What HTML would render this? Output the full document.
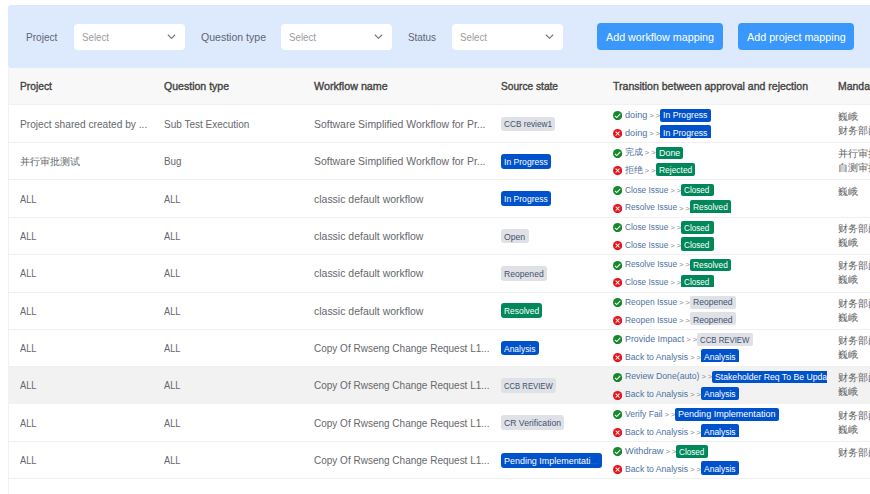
<!DOCTYPE html>
<html lang="en">
<head>
<meta charset="utf-8">
<title>Workflow mapping</title>
<style>
html,body{margin:0;padding:0;background:#fff;}
body{width:870px;height:494px;overflow:hidden;position:relative;font-family:"Liberation Sans",sans-serif;color:#606266;}
.panel{position:absolute;left:8px;top:5px;width:862px;height:63px;}
.pbg{position:absolute;left:0.3px;top:0.3px;width:862px;height:62.5px;background:#dde9fc;border-radius:3px 0 0 3px;}
.lbl{position:absolute;transform-origin:0 50%;top:23.7px;font-size:11px;line-height:16px;color:#5d6575;white-space:nowrap;}
.sel{position:absolute;top:19px;width:111px;height:26px;background:#fff;border-radius:4px;}
.sel .ph{position:absolute;transform-origin:0 50%;left:8.1px;top:4.7px;font-size:11px;line-height:16px;color:#9a9ca1;}
.sel .chev{position:absolute;left:93.3px;top:10.1px;width:9px;height:5.4px;}
.btn{position:absolute;top:18px;height:27px;background:#3a98fc;border-radius:4px;color:#fff;text-align:center;}
.btn span{position:absolute;top:1.3px;transform-origin:0 50%;font-size:11px;line-height:27px;white-space:nowrap;}
.tbl{position:absolute;left:8px;top:68px;width:862px;height:426px;}
.lb{position:absolute;left:8px;top:68px;width:1px;height:426px;background:#f2f2f2;}
.thead{position:absolute;left:0;top:0;width:862px;height:37.4px;background:#f8f8f8;border-bottom:1px solid #f1f1f1;box-sizing:border-box;}
.th{position:absolute;transform-origin:0 50%;top:10.2px;font-size:11px;line-height:16px;font-weight:normal;-webkit-text-stroke:0.38px #444;color:#444;white-space:nowrap;}
.tr{position:absolute;left:0;width:862px;height:37.35px;}
.bl{position:absolute;left:0;width:862px;height:1px;background:#f0f0f0;}
.tr.hov{background:#f2f2f2;}
.td{position:absolute;transform-origin:0 50%;top:11px;font-size:11px;line-height:16px;color:#66686c;white-space:nowrap;}
.tag{position:absolute;display:block;height:12.6px;border-radius:2px;overflow:hidden;white-space:nowrap;font-size:9.7px;line-height:12.6px;text-align:center;}
.tag i{font-style:normal;position:absolute;left:3.1px;top:0;transform-origin:0 50%;}
.tag.st{top:11.7px;height:14.8px;line-height:14.8px;font-size:9.9px;border-radius:3px;}
.tag.st i{top:0.9px;}
.tag.g{background:#dfe1e6;color:#42526e;}
.tag.b{background:#0052cc;color:#fff;}
.tag.gr{background:#00875a;color:#fff;}
.trans{position:absolute;left:605px;top:0;width:214.2px;height:34px;overflow:hidden;}
.ln{position:absolute;left:0;width:300px;height:16px;}
.ln.l0{top:0;}
.ln.l1{top:17.9px;}
.ln .ic{position:absolute;left:-0.3px;top:6.3px;width:9.2px;height:9.2px;}
.ln .tx{position:absolute;transform-origin:0 50%;left:12.4px;top:3px;font-size:9.7px;line-height:14px;color:#4d72a3;white-space:nowrap;}
.ln .gt{position:absolute;top:4.1px;font-size:7.9px;line-height:14px;color:#8c8c8c;white-space:nowrap;letter-spacing:1.7px;}
.ln.l0 .tag{top:4.3px;}
.ln.l1 .tag{top:2.5px;}
.ln.l0 .tag i{top:0.3px;}
.ln.l1 .tag i{top:1.5px;}
.manda{position:absolute;left:830px;top:5px;width:40px;font-size:10px;line-height:14px;color:#606266;white-space:nowrap;overflow:hidden;}
.tr.odd .ln.l1 .tag{border-bottom-left-radius:0;border-bottom-right-radius:0;}
.tr.even .ln.l1 .tag{height:13.2px;}
.tag i b{font-weight:normal;color:rgba(255,255,255,.22);}
</style>
</head>
<body>
<div class="panel">
  <div class="pbg"></div>
  <span class="lbl" style="left:18.2px;transform:scaleX(0.917)">Project</span>
  <div class="sel" style="left:66.0px"><span class="ph" style="transform:scaleX(0.883)">Select</span><svg class="chev" viewBox="0 0 10 6"><path d="M1 0.8l4 4 4-4" fill="none" stroke="#75767a" stroke-width="1.3"/></svg></div>
  <span class="lbl" style="left:192.8px;transform:scaleX(0.958)">Question type</span>
  <div class="sel" style="left:273.0px"><span class="ph" style="transform:scaleX(0.883)">Select</span><svg class="chev" viewBox="0 0 10 6"><path d="M1 0.8l4 4 4-4" fill="none" stroke="#75767a" stroke-width="1.3"/></svg></div>
  <span class="lbl" style="left:400.1px;transform:scaleX(0.898)">Status</span>
  <div class="sel" style="left:444.0px"><span class="ph" style="transform:scaleX(0.883)">Select</span><svg class="chev" viewBox="0 0 10 6"><path d="M1 0.8l4 4 4-4" fill="none" stroke="#75767a" stroke-width="1.3"/></svg></div>
  <div class="btn" style="left:589.0px;width:125.7px"><span style="left:8.9px;transform:scaleX(0.976)">Add workflow mapping</span></div>
  <div class="btn" style="left:729.7px;width:116.6px"><span style="left:8.9px;transform:scaleX(0.978)">Add project mapping</span></div>
</div>
<div class="tbl">
<div class="thead">
  <span class="th" style="left:11.9px;transform:scaleX(0.931)">Project</span>
  <span class="th" style="left:156.0px;transform:scaleX(0.959)">Question type</span>
  <span class="th" style="left:305.6px;transform:scaleX(0.975)">Workflow name</span>
  <span class="th" style="left:492.9px;transform:scaleX(0.923)">Source state</span>
  <span class="th" style="left:605.3px;transform:scaleX(0.957)">Transition between approval and rejection</span>
  <span class="th" style="left:829.9px;transform:scaleX(0.95)">Mandatory approver</span>
</div>
<div class="tr odd" style="top:36.90px">
  <span class="td" style="left:12.1px;transform:scaleX(0.925)">Project shared created by ...</span>
  <span class="td" style="left:156.3px;transform:scaleX(0.909)">Sub Test Execution</span>
  <span class="td" style="left:305.8px;transform:scaleX(0.949)">Software Simplified Workflow for Pr...</span>
  <span class="tag g st" style="left:493.2px;width:54.2px"><i style="transform:scaleX(0.833)">CCB review1</i></span>
  <div class="trans">
    <div class="ln l0"><svg class="ic" viewBox="0 0 16 16"><circle cx="8" cy="8" r="8" fill="#14892c"/><path d="M3.4 8.4l3.2 3 6-6.3" fill="none" stroke="#fff" stroke-width="1.9"/></svg><span class="tx" style="transform:scaleX(0.944)">doing</span><span class="gt" style="left:36.3px">&gt;&gt;</span><span class="tag b" style="left:47.3px;width:50.6px"><i style="transform:scaleX(0.896)">In Progress</i></span></div>
    <div class="ln l1"><svg class="ic" viewBox="0 0 16 16"><circle cx="8" cy="8" r="8" fill="#e6151f"/><path d="M4.7 4.7l6.6 6.6M11.3 4.7l-6.6 6.6" fill="none" stroke="#fff" stroke-width="1.75"/></svg><span class="tx" style="transform:scaleX(0.944)">doing</span><span class="gt" style="left:36.3px">&gt;&gt;</span><span class="tag b" style="left:47.3px;width:50.6px"><i style="transform:scaleX(0.896)">In Progress</i></span></div>
  </div>
  <div class="manda"><div>巍峨</div><div>财务部门</div></div>
</div>
<div class="tr even" style="top:74.25px">
  <span class="td" style="left:12.1px;font-size:10.45px;top:11.8px">并行审批测试</span>
  <span class="td" style="left:156.3px;transform:scaleX(0.894)">Bug</span>
  <span class="td" style="left:305.8px;transform:scaleX(0.949)">Software Simplified Workflow for Pr...</span>
  <span class="tag b st" style="left:493.2px;width:50.1px"><i style="transform:scaleX(0.869)">In Progress</i></span>
  <div class="trans">
    <div class="ln l0"><svg class="ic" viewBox="0 0 16 16"><circle cx="8" cy="8" r="8" fill="#14892c"/><path d="M3.4 8.4l3.2 3 6-6.3" fill="none" stroke="#fff" stroke-width="1.9"/></svg><span class="tx" style="font-size:9px">完成</span><span class="gt" style="left:31.6px">&gt;&gt;</span><span class="tag gr" style="left:42.6px;width:27.5px"><i style="transform:scaleX(0.919)">Done</i></span></div>
    <div class="ln l1"><svg class="ic" viewBox="0 0 16 16"><circle cx="8" cy="8" r="8" fill="#e6151f"/><path d="M4.7 4.7l6.6 6.6M11.3 4.7l-6.6 6.6" fill="none" stroke="#fff" stroke-width="1.75"/></svg><span class="tx" style="font-size:9px">拒绝</span><span class="gt" style="left:31.6px">&gt;&gt;</span><span class="tag gr" style="left:42.6px;width:39.5px"><i style="transform:scaleX(0.871)">Rejected</i></span></div>
  </div>
  <div class="manda"><div>并行审批</div><div>自测审批</div></div>
</div>
<div class="tr odd" style="top:111.60px">
  <span class="td" style="left:12.1px;transform:scaleX(0.843)">ALL</span>
  <span class="td" style="left:156.3px;transform:scaleX(0.843)">ALL</span>
  <span class="td" style="left:305.8px;transform:scaleX(0.952)">classic default workflow</span>
  <span class="tag b st" style="left:493.2px;width:50.1px"><i style="transform:scaleX(0.869)">In Progress</i></span>
  <div class="trans">
    <div class="ln l0"><svg class="ic" viewBox="0 0 16 16"><circle cx="8" cy="8" r="8" fill="#14892c"/><path d="M3.4 8.4l3.2 3 6-6.3" fill="none" stroke="#fff" stroke-width="1.9"/></svg><span class="tx" style="transform:scaleX(0.855)">Close Issue</span><span class="gt" style="left:57.2px">&gt;&gt;</span><span class="tag gr" style="left:68.2px;width:33.1px"><i style="transform:scaleX(0.842)">Closed</i></span></div>
    <div class="ln l1"><svg class="ic" viewBox="0 0 16 16"><circle cx="8" cy="8" r="8" fill="#e6151f"/><path d="M4.7 4.7l6.6 6.6M11.3 4.7l-6.6 6.6" fill="none" stroke="#fff" stroke-width="1.75"/></svg><span class="tx" style="transform:scaleX(0.856)">Resolve Issue</span><span class="gt" style="left:66.0px">&gt;&gt;</span><span class="tag gr" style="left:77.0px;width:41.0px"><i style="transform:scaleX(0.862)">Resolved</i></span></div>
  </div>
  <div class="manda"><div>巍峨</div></div>
</div>
<div class="tr even" style="top:148.95px">
  <span class="td" style="left:12.1px;transform:scaleX(0.843)">ALL</span>
  <span class="td" style="left:156.3px;transform:scaleX(0.843)">ALL</span>
  <span class="td" style="left:305.8px;transform:scaleX(0.952)">classic default workflow</span>
  <span class="tag g st" style="left:493.2px;width:27.4px"><i style="transform:scaleX(0.877)">Open</i></span>
  <div class="trans">
    <div class="ln l0"><svg class="ic" viewBox="0 0 16 16"><circle cx="8" cy="8" r="8" fill="#14892c"/><path d="M3.4 8.4l3.2 3 6-6.3" fill="none" stroke="#fff" stroke-width="1.9"/></svg><span class="tx" style="transform:scaleX(0.855)">Close Issue</span><span class="gt" style="left:57.2px">&gt;&gt;</span><span class="tag gr" style="left:68.2px;width:33.1px"><i style="transform:scaleX(0.842)">Closed</i></span></div>
    <div class="ln l1"><svg class="ic" viewBox="0 0 16 16"><circle cx="8" cy="8" r="8" fill="#e6151f"/><path d="M4.7 4.7l6.6 6.6M11.3 4.7l-6.6 6.6" fill="none" stroke="#fff" stroke-width="1.75"/></svg><span class="tx" style="transform:scaleX(0.855)">Close Issue</span><span class="gt" style="left:57.2px">&gt;&gt;</span><span class="tag gr" style="left:68.2px;width:33.1px"><i style="transform:scaleX(0.842)">Closed</i></span></div>
  </div>
  <div class="manda"><div>财务部门</div><div>巍峨</div></div>
</div>
<div class="tr odd" style="top:186.30px">
  <span class="td" style="left:12.1px;transform:scaleX(0.843)">ALL</span>
  <span class="td" style="left:156.3px;transform:scaleX(0.843)">ALL</span>
  <span class="td" style="left:305.8px;transform:scaleX(0.952)">classic default workflow</span>
  <span class="tag g st" style="left:493.2px;width:45.9px"><i style="transform:scaleX(0.871)">Reopened</i></span>
  <div class="trans">
    <div class="ln l0"><svg class="ic" viewBox="0 0 16 16"><circle cx="8" cy="8" r="8" fill="#14892c"/><path d="M3.4 8.4l3.2 3 6-6.3" fill="none" stroke="#fff" stroke-width="1.9"/></svg><span class="tx" style="transform:scaleX(0.856)">Resolve Issue</span><span class="gt" style="left:66.0px">&gt;&gt;</span><span class="tag gr" style="left:77.0px;width:41.0px"><i style="transform:scaleX(0.862)">Resolved</i></span></div>
    <div class="ln l1"><svg class="ic" viewBox="0 0 16 16"><circle cx="8" cy="8" r="8" fill="#e6151f"/><path d="M4.7 4.7l6.6 6.6M11.3 4.7l-6.6 6.6" fill="none" stroke="#fff" stroke-width="1.75"/></svg><span class="tx" style="transform:scaleX(0.855)">Close Issue</span><span class="gt" style="left:57.2px">&gt;&gt;</span><span class="tag gr" style="left:68.2px;width:33.1px"><i style="transform:scaleX(0.842)">Closed</i></span></div>
  </div>
  <div class="manda"><div>财务部门</div><div>巍峨</div></div>
</div>
<div class="tr even" style="top:223.65px">
  <span class="td" style="left:12.1px;transform:scaleX(0.843)">ALL</span>
  <span class="td" style="left:156.3px;transform:scaleX(0.843)">ALL</span>
  <span class="td" style="left:305.8px;transform:scaleX(0.952)">classic default workflow</span>
  <span class="tag gr st" style="left:493.2px;width:41.3px"><i style="transform:scaleX(0.853)">Resolved</i></span>
  <div class="trans">
    <div class="ln l0"><svg class="ic" viewBox="0 0 16 16"><circle cx="8" cy="8" r="8" fill="#14892c"/><path d="M3.4 8.4l3.2 3 6-6.3" fill="none" stroke="#fff" stroke-width="1.9"/></svg><span class="tx" style="transform:scaleX(0.872)">Reopen Issue</span><span class="gt" style="left:66.0px">&gt;&gt;</span><span class="tag g" style="left:77.0px;width:45.8px"><i style="transform:scaleX(0.886)">Reopened</i></span></div>
    <div class="ln l1"><svg class="ic" viewBox="0 0 16 16"><circle cx="8" cy="8" r="8" fill="#e6151f"/><path d="M4.7 4.7l6.6 6.6M11.3 4.7l-6.6 6.6" fill="none" stroke="#fff" stroke-width="1.75"/></svg><span class="tx" style="transform:scaleX(0.872)">Reopen Issue</span><span class="gt" style="left:66.0px">&gt;&gt;</span><span class="tag g" style="left:77.0px;width:45.8px"><i style="transform:scaleX(0.886)">Reopened</i></span></div>
  </div>
  <div class="manda"><div>财务部门</div><div>巍峨</div></div>
</div>
<div class="tr odd" style="top:261.00px">
  <span class="td" style="left:12.1px;transform:scaleX(0.843)">ALL</span>
  <span class="td" style="left:156.3px;transform:scaleX(0.843)">ALL</span>
  <span class="td" style="left:305.8px;transform:scaleX(0.909)">Copy Of Rwseng Change Request L1...</span>
  <span class="tag b st" style="left:493.2px;width:37.7px"><i style="transform:scaleX(0.856)">Analysis</i></span>
  <div class="trans">
    <div class="ln l0"><svg class="ic" viewBox="0 0 16 16"><circle cx="8" cy="8" r="8" fill="#14892c"/><path d="M3.4 8.4l3.2 3 6-6.3" fill="none" stroke="#fff" stroke-width="1.9"/></svg><span class="tx" style="transform:scaleX(0.916)">Provide Impact</span><span class="gt" style="left:73.1px">&gt;&gt;</span><span class="tag g" style="left:84.1px;width:55.6px"><i style="transform:scaleX(0.805)">CCB REVIEW</i></span></div>
    <div class="ln l1"><svg class="ic" viewBox="0 0 16 16"><circle cx="8" cy="8" r="8" fill="#e6151f"/><path d="M4.7 4.7l6.6 6.6M11.3 4.7l-6.6 6.6" fill="none" stroke="#fff" stroke-width="1.75"/></svg><span class="tx" style="transform:scaleX(0.893)">Back to Analysis</span><span class="gt" style="left:76.9px">&gt;&gt;</span><span class="tag b" style="left:87.9px;width:37.8px"><i style="transform:scaleX(0.876)">Analysis</i></span></div>
  </div>
  <div class="manda"><div>财务部门</div><div>巍峨</div></div>
</div>
<div class="tr hov even" style="top:298.35px">
  <span class="td" style="left:12.1px;transform:scaleX(0.843)">ALL</span>
  <span class="td" style="left:156.3px;transform:scaleX(0.843)">ALL</span>
  <span class="td" style="left:305.8px;transform:scaleX(0.909)">Copy Of Rwseng Change Request L1...</span>
  <span class="tag g st" style="left:493.2px;width:54.9px"><i style="transform:scaleX(0.778)">CCB REVIEW</i></span>
  <div class="trans">
    <div class="ln l0"><svg class="ic" viewBox="0 0 16 16"><circle cx="8" cy="8" r="8" fill="#14892c"/><path d="M3.4 8.4l3.2 3 6-6.3" fill="none" stroke="#fff" stroke-width="1.9"/></svg><span class="tx" style="transform:scaleX(0.898)">Review Done(auto)</span><span class="gt" style="left:88.4px">&gt;&gt;</span><span class="tag b" style="left:99.4px;width:147.6px;"><i style="transform:scaleX(0.895)">Stakeholder Req To Be Updated</i></span></div>
    <div class="ln l1"><svg class="ic" viewBox="0 0 16 16"><circle cx="8" cy="8" r="8" fill="#e6151f"/><path d="M4.7 4.7l6.6 6.6M11.3 4.7l-6.6 6.6" fill="none" stroke="#fff" stroke-width="1.75"/></svg><span class="tx" style="transform:scaleX(0.893)">Back to Analysis</span><span class="gt" style="left:76.9px">&gt;&gt;</span><span class="tag b" style="left:87.9px;width:37.8px"><i style="transform:scaleX(0.876)">Analysis</i></span></div>
  </div>
  <div class="manda"><div>财务部门</div><div>巍峨</div></div>
</div>
<div class="tr odd" style="top:335.70px">
  <span class="td" style="left:12.1px;transform:scaleX(0.843)">ALL</span>
  <span class="td" style="left:156.3px;transform:scaleX(0.843)">ALL</span>
  <span class="td" style="left:305.8px;transform:scaleX(0.909)">Copy Of Rwseng Change Request L1...</span>
  <span class="tag g st" style="left:493.2px;width:63.3px"><i style="transform:scaleX(0.874)">CR Verification</i></span>
  <div class="trans">
    <div class="ln l0"><svg class="ic" viewBox="0 0 16 16"><circle cx="8" cy="8" r="8" fill="#14892c"/><path d="M3.4 8.4l3.2 3 6-6.3" fill="none" stroke="#fff" stroke-width="1.9"/></svg><span class="tx" style="transform:scaleX(0.882)">Verify Fail</span><span class="gt" style="left:51.4px">&gt;&gt;</span><span class="tag b" style="left:62.4px;width:103.7px"><i style="transform:scaleX(0.933)">Pending Implementation</i></span></div>
    <div class="ln l1"><svg class="ic" viewBox="0 0 16 16"><circle cx="8" cy="8" r="8" fill="#e6151f"/><path d="M4.7 4.7l6.6 6.6M11.3 4.7l-6.6 6.6" fill="none" stroke="#fff" stroke-width="1.75"/></svg><span class="tx" style="transform:scaleX(0.893)">Back to Analysis</span><span class="gt" style="left:76.9px">&gt;&gt;</span><span class="tag b" style="left:87.9px;width:37.8px"><i style="transform:scaleX(0.876)">Analysis</i></span></div>
  </div>
  <div class="manda"><div>财务部门</div><div>巍峨</div></div>
</div>
<div class="tr even" style="top:373.05px">
  <span class="td" style="left:12.1px;transform:scaleX(0.843)">ALL</span>
  <span class="td" style="left:156.3px;transform:scaleX(0.843)">ALL</span>
  <span class="td" style="left:305.8px;transform:scaleX(0.909)">Copy Of Rwseng Change Request L1...</span>
  <span class="tag b st" style="left:493.2px;width:101.0px;"><i style="transform:scaleX(0.906)">Pending Implementati<b>...</b></i></span>
  <div class="trans">
    <div class="ln l0"><svg class="ic" viewBox="0 0 16 16"><circle cx="8" cy="8" r="8" fill="#14892c"/><path d="M3.4 8.4l3.2 3 6-6.3" fill="none" stroke="#fff" stroke-width="1.9"/></svg><span class="tx" style="transform:scaleX(0.954)">Withdraw</span><span class="gt" style="left:52.4px">&gt;&gt;</span><span class="tag gr" style="left:63.4px;width:31.6px"><i style="transform:scaleX(0.842)">Closed</i></span></div>
    <div class="ln l1"><svg class="ic" viewBox="0 0 16 16"><circle cx="8" cy="8" r="8" fill="#e6151f"/><path d="M4.7 4.7l6.6 6.6M11.3 4.7l-6.6 6.6" fill="none" stroke="#fff" stroke-width="1.75"/></svg><span class="tx" style="transform:scaleX(0.893)">Back to Analysis</span><span class="gt" style="left:76.9px">&gt;&gt;</span><span class="tag b" style="left:87.9px;width:37.8px"><i style="transform:scaleX(0.876)">Analysis</i></span></div>
  </div>
  <div class="manda"><div>财务部门</div></div>
</div>
<div class="bl" style="top:74px"></div>
<div class="bl" style="top:111px"></div>
<div class="bl" style="top:149px"></div>
<div class="bl" style="top:186px"></div>
<div class="bl" style="top:224px"></div>
<div class="bl" style="top:261px"></div>
<div class="bl" style="top:298px"></div>
<div class="bl" style="top:335px"></div>
<div class="bl" style="top:373px"></div>
<div class="bl" style="top:410px"></div>
</div>
<div class="lb"></div>
</body>
</html>
